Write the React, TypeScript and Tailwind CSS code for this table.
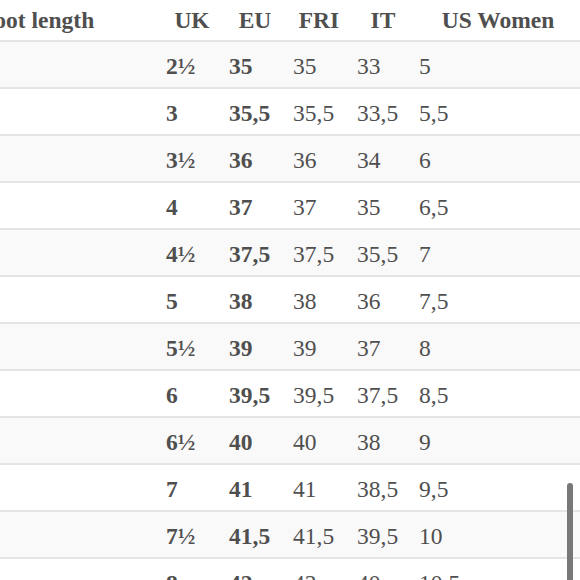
const rows: string[][] = [
  ['2½', '35', '35', '33', '5'],
  ['3', '35,5', '35,5', '33,5', '5,5'],
  ['3½', '36', '36', '34', '6'],
  ['4', '37', '37', '35', '6,5'],
  ['4½', '37,5', '37,5', '35,5', '7'],
  ['5', '38', '38', '36', '7,5'],
  ['5½', '39', '39', '37', '8'],
  ['6', '39,5', '39,5', '37,5', '8,5'],
  ['6½', '40', '40', '38', '9'],
  ['7', '41', '41', '38,5', '9,5'],
  ['7½', '41,5', '41,5', '39,5', '10'],
  ['8', '42', '42', '40', '10,5'],
];

export default function App() {
  return (
    <div
      className="relative w-[580px] h-[580px] overflow-hidden bg-white text-[#4f4f4f] text-[23.5px] leading-none"
      style={{ fontFamily: '"Liberation Serif", "Times New Roman", serif' }}
    >
      <div className="ml-[-15px] w-[760px]">
        <div className="flex h-[42px] items-center pt-[2px] font-bold border-b-2 border-[#e4e4e4]">
          <div className="w-[186px] ml-[-5px]">Foot length</div>
          <div className="w-[63px] pr-[11px] text-center">UK</div>
          <div className="w-[64px] pr-[12px] text-center">EU</div>
          <div className="w-[64px] pr-[12px] text-center">FRI</div>
          <div className="w-[62px] pr-[10px] text-center">IT</div>
          <div className="w-[158px] text-center">US Women</div>
        </div>
        {rows.map((r, i) => (
          <div
            key={i}
            className={`flex h-[47px] items-center pt-[5px] border-b-2 border-[#e4e4e4] ${
              i % 2 === 0 ? 'bg-[#f9f9f9]' : 'bg-white'
            }`}
          >
            <div className="w-[181px]" />
            <div className="w-[63px] font-bold">{r[0]}</div>
            <div className="w-[64px] font-bold">{r[1]}</div>
            <div className="w-[64px]">{r[2]}</div>
            <div className="w-[62px]">{r[3]}</div>
            <div className="w-[158px]">{r[4]}</div>
          </div>
        ))}
      </div>
      <div className="absolute left-[567px] top-[483px] w-[6px] h-[120px] rounded-full bg-[#787878]" />
    </div>
  );
}
